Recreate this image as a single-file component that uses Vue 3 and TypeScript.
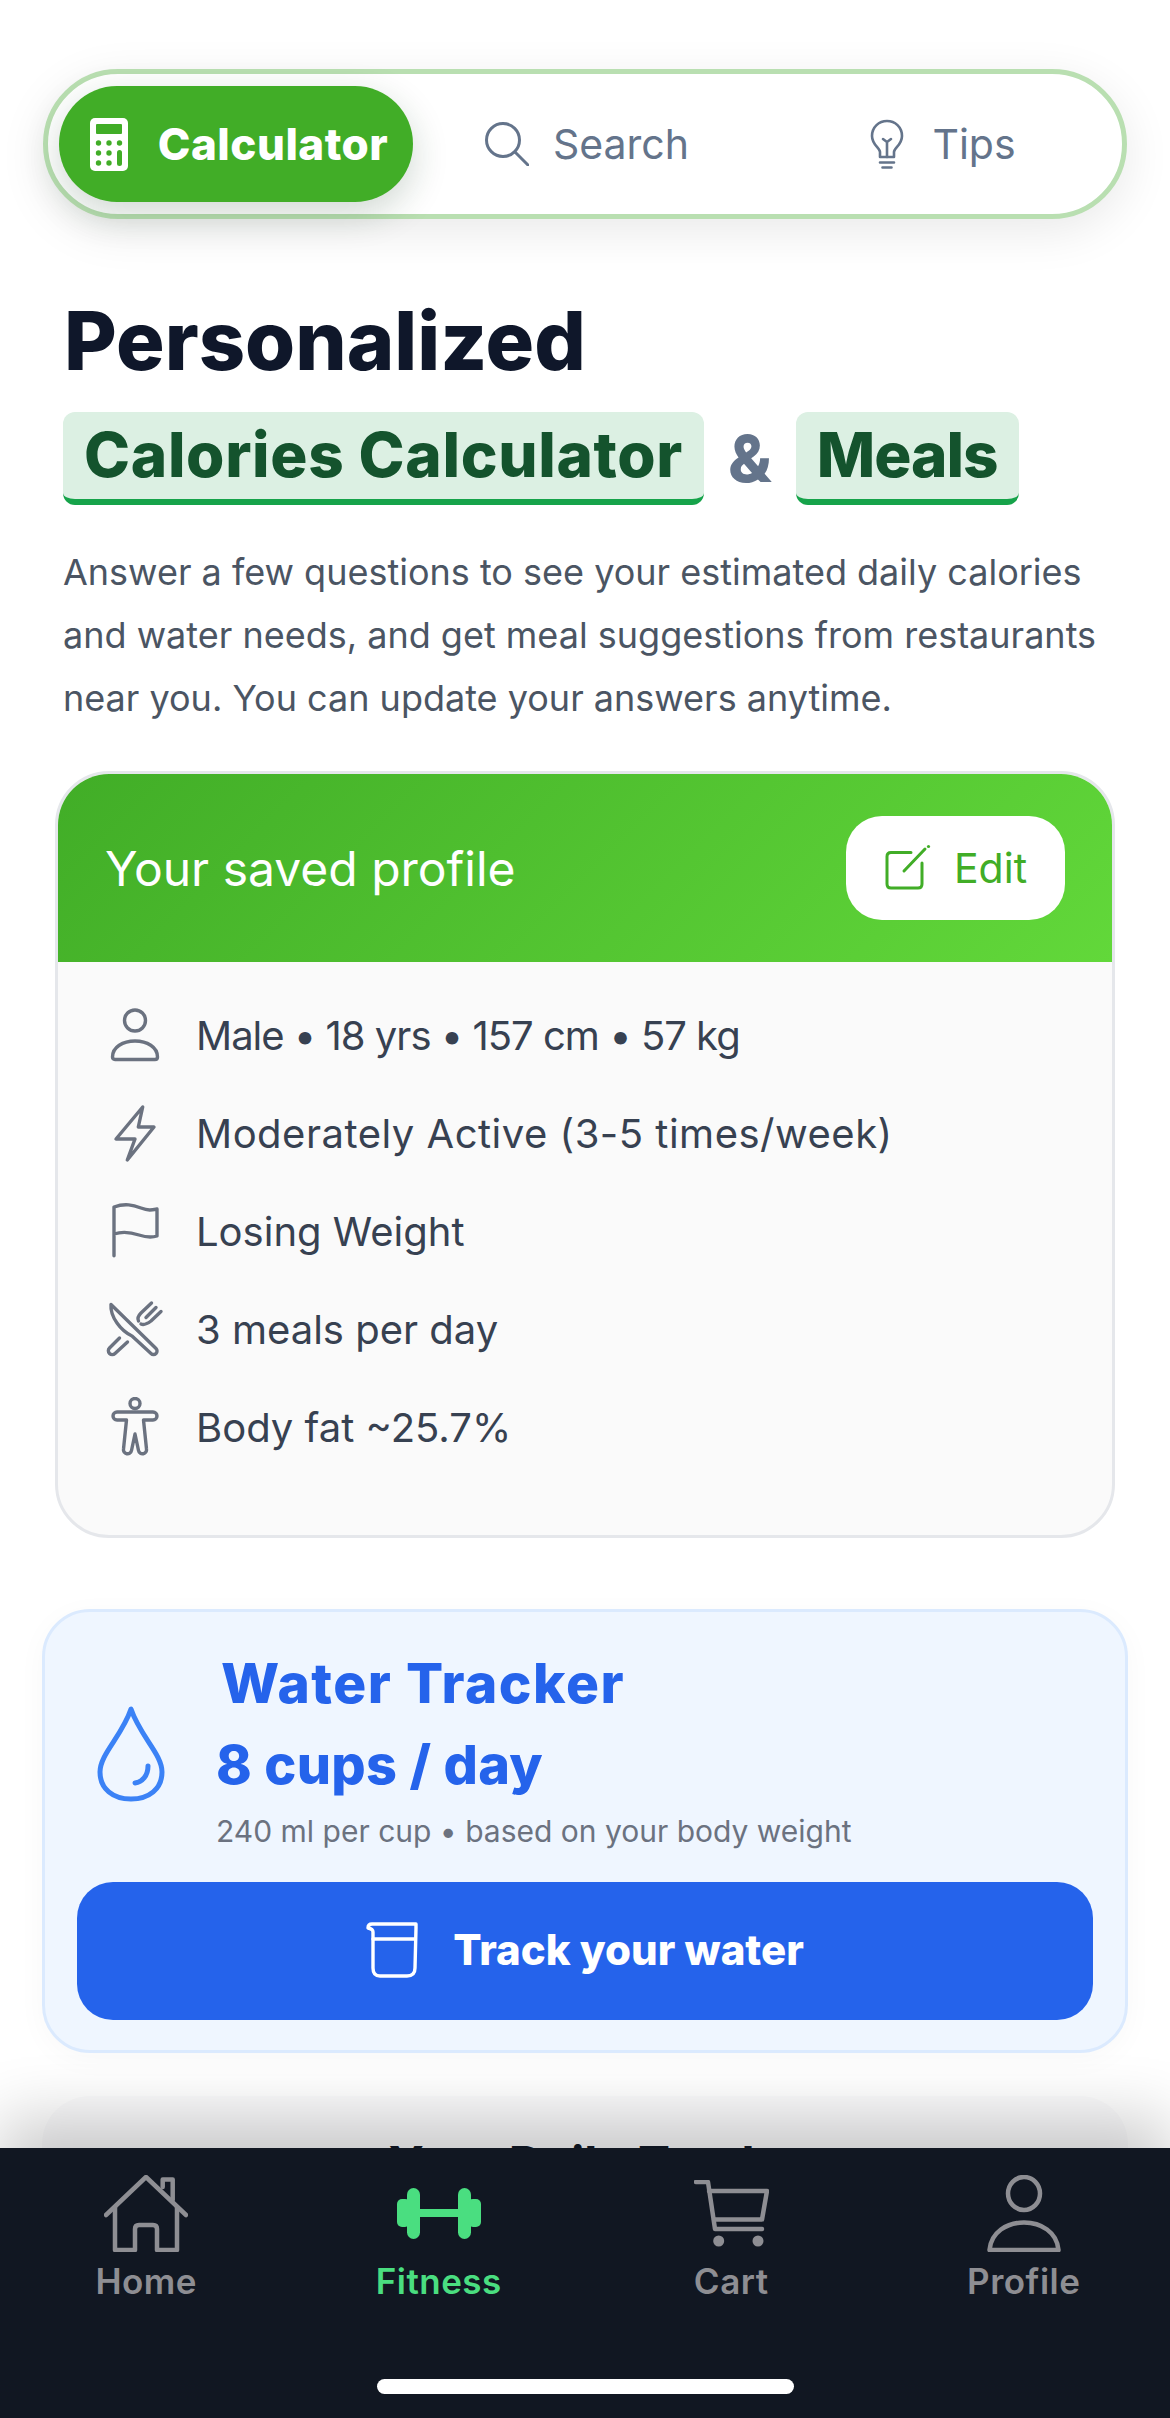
<template>
  <div class="screen">
    <main class="content">
      <nav class="seg">
        <div class="seg-tab active">
          <svg class="calc" viewBox="0 0 38 53">
            <rect width="38" height="53" rx="5" fill="#fff" />
            <rect x="6" y="6" width="26" height="10" rx="1" fill="#41ad27" />
            <circle v-for="d in calcDots" :key="d[0] + '-' + d[1]" :cx="d[0]" :cy="d[1]" r="2.7" fill="#41ad27" />
            <rect x="27" y="32" width="5" height="16" rx="2.5" fill="#41ad27" />
          </svg>
          <span>Calculator</span>
        </div>
        <div class="seg-tab search">
          <svg class="search-icon" viewBox="0 0 44 44" fill="none" stroke="#64748b" stroke-width="3" stroke-linecap="round">
            <circle cx="18" cy="18" r="16.5" />
            <path d="M30 30 L43 43" />
          </svg>
          <span>Search</span>
        </div>
        <div class="seg-tab tips">
          <svg class="bulb-icon" viewBox="0 0 34 50" fill="none" stroke="#64748b" stroke-width="2.6" stroke-linecap="round" stroke-linejoin="round">
            <path d="M10 38 V33 C10 29 2 26 2 17 C2 8 9 2 17 2 S32 8 32 17 C32 26 24 29 24 33 V38 Z" />
            <path d="M17 38 V23 M13 20 L17 23 L21 20 M10 43.5 H24 M12.5 48.5 H21.5" />
          </svg>
          <span>Tips</span>
        </div>
      </nav>

      <section class="intro">
        <h1>Personalized</h1>
        <div class="marks">
          <span class="mark">Calories Calculator</span>
          <span class="amp">&amp;</span>
          <span class="mark short">Meals</span>
        </div>
        <p>Answer a few questions to see your estimated daily calories and water needs, and get meal suggestions from restaurants near you. You can update your answers anytime.</p>
      </section>

      <section class="profile">
        <header class="profile-head">
          <span class="profile-title">Your saved profile</span>
          <button class="edit">
            <svg viewBox="0 0 50 50" fill="none" stroke="#41ad27" stroke-width="3" stroke-linecap="round">
              <path d="M27 9.5 H7 Q3 9.5 3 13.5 V41 Q3 45 7 45 H34 Q38 45 38 41 V20" />
              <path d="M20 28 L41 6" />
              <circle cx="44.5" cy="3.5" r="1.6" fill="#41ad27" stroke="none" />
            </svg>
            <span>Edit</span>
          </button>
        </header>
        <ul class="rows">
          <li class="tight">
            <svg viewBox="0 0 60 60">
              <circle cx="30" cy="15.5" r="10.5" />
              <path d="M7.5 52 C7.5 42 18 36 30 36 S52.5 42 52.5 52 Q52.5 54.5 50 54.5 H10 Q7.5 54.5 7.5 52 Z" />
            </svg>
            <span>Male • 18 yrs • 157 cm • 57 kg</span>
          </li>
          <li class="loose">
            <svg viewBox="0 0 60 60">
              <path d="M37.7 4 L11 36 H30 L22.3 57 L49 24 H33.3 Z" />
            </svg>
            <span>Moderately Active (3-5 times/week)</span>
          </li>
          <li>
            <svg viewBox="0 0 60 60">
              <path d="M9 54.7 V6 C20 2 28 4 36 7 S47 9 52 8 V35 C46 37 40 36 34 34 S18 30 9 33" />
            </svg>
            <span>Losing Weight</span>
          </li>
          <li>
            <svg viewBox="0 0 60 60">
              <path d="M6 5.5 L51 49.5 A3.5 3.5 0 0 1 46 54.5 L27 37 C16 32 5 18 6 5.5 Z" />
              <path d="M14.5 39 L4.5 49 A3.8 3.8 0 0 0 10 54.5 L22.5 43" />
              <path d="M46.5 4 L36 14 C33 17 32.5 20 33.5 22 M56 12.5 L46 22 C42 25 38 26 36 25 M51 8.5 L41 18.5" />
            </svg>
            <span>3 meals per day</span>
          </li>
          <li>
            <svg viewBox="0 0 60 60">
              <circle cx="30" cy="6.5" r="5" />
              <path d="M12 15 H48 A4 4 0 0 1 48 23 H38.5 L41.5 52 A4 4 0 0 1 33.5 53.5 L30 37 L26.5 53.5 A4 4 0 0 1 18.5 52 L21.5 23 H12 A4 4 0 0 1 12 15 Z" />
            </svg>
            <span>Body fat ~25.7%</span>
          </li>
        </ul>
      </section>

      <section class="water">
        <div class="water-top">
          <svg class="drop" viewBox="0 0 68 96" fill="none" stroke="#3b82f6" stroke-width="5" stroke-linecap="round" stroke-linejoin="round">
            <path d="M34 3 C25 30 3 48 3 66 C3 83 16 93 34 93 C52 93 65 83 65 66 C65 48 43 30 34 3 Z" />
            <path d="M51 60 C51 70 45 76 38 77" />
          </svg>
          <div class="water-text">
            <h2>Water Tracker</h2>
            <div class="cups">8 cups / day</div>
            <div class="cups-note">240 ml per cup • based on your body weight</div>
          </div>
        </div>
        <button class="track">
          <svg viewBox="0 0 52 56" fill="none" stroke="#fff" stroke-width="3.4" stroke-linecap="round" stroke-linejoin="round">
            <path d="M2 6 Q2 2 6 2 H50 V6 L49 46 Q49 54 41 54 H14 Q7 54 7 46 V10 Q7 7 2 6 Z" />
            <path d="M7 17 H49" />
          </svg>
          <span>Track your water</span>
        </button>
      </section>

      <section class="totals">
        <h2>Your Daily Totals</h2>
      </section>
    </main>

    <footer class="tabbar">
      <div class="tabs">
        <div v-for="tab in tabs" :key="tab.label" class="tab" :class="{ on: tab.on }">
          <div class="tab-icon">
            <svg v-if="tab.label === 'Home'" width="84" height="77" viewBox="0 0 84 77" fill="none" stroke="#8e8e93" stroke-width="4.5" stroke-linecap="round" stroke-linejoin="round">
              <path d="M2 40 L42 2 L82 40" />
              <path d="M11 32 V75 H31 V54 Q31 50 35 50 H49 Q53 50 53 54 V75 H73 V32" />
              <path d="M58.7 12 V4.5 H68.7 V25" />
            </svg>
            <svg v-else-if="tab.label === 'Fitness'" width="84" height="51" viewBox="0 0 84 51" fill="#4ade80">
              <rect x="0" y="11" width="13" height="28" rx="5" />
              <rect x="10" y="0" width="13" height="51" rx="6.5" />
              <rect x="20" y="21" width="44" height="8" />
              <rect x="61" y="0" width="13" height="51" rx="6.5" />
              <rect x="71" y="11" width="13" height="28" rx="5" />
            </svg>
            <svg v-else-if="tab.label === 'Cart'" width="75" height="67" viewBox="0 0 75 67" fill="none" stroke="#8e8e93" stroke-width="4.5" stroke-linecap="round" stroke-linejoin="round">
              <path d="M2 2 H14 L21 49 H68" />
              <path d="M15 11 H73 L68 39.5 H20" />
              <circle cx="24.7" cy="61" r="5.5" fill="#8e8e93" stroke="none" />
              <circle cx="64" cy="61" r="5.5" fill="#8e8e93" stroke="none" />
            </svg>
            <svg v-else width="74" height="77" viewBox="0 0 74 77" fill="none" stroke="#8e8e93" stroke-width="4.5" stroke-linejoin="round">
              <ellipse cx="37" cy="18.5" rx="16" ry="16.5" />
              <path d="M2.5 75 C4 57 20 47.5 37 47.5 S70 57 71.5 75 Z" />
            </svg>
          </div>
          <span class="tab-label">{{ tab.label }}</span>
        </div>
      </div>
      <div class="home-bar"></div>
    </footer>
  </div>
</template>

<script setup lang="ts">
type Tab = { label: string; on?: boolean };

const tabs: Tab[] = [
  { label: "Home" },
  { label: "Fitness", on: true },
  { label: "Cart" },
  { label: "Profile" },
];

const calcDots: [number, number][] = [
  [8.5, 25],
  [19, 25],
  [29.5, 25],
  [8.5, 35],
  [19, 35],
  [8.5, 45],
  [19, 45],
];
</script>

<style>
body {
  background: #fff;
}
</style>

<style scoped>
.screen {
  width: 1170px;
  height: 2418px;
  display: flex;
  flex-direction: column;
  overflow: hidden;
  background: #fff;
  font-family: Inter, "Liberation Sans", sans-serif;
}

.content {
  flex: 1;
  min-height: 0;
  overflow: hidden;
  padding-top: 69px;
}

.seg {
  margin: 0 43px;
  height: 150px;
  box-sizing: border-box;
  padding: 12px 11px;
  display: flex;
  border: 5px solid #b9dfb1;
  border-radius: 75px;
  background: #fff;
  box-shadow: 0 12px 48px rgba(0, 0, 0, 0.09);
}

.seg-tab {
  flex: 1;
  display: flex;
  align-items: center;
  justify-content: center;
  gap: 24px;
  font-size: 41px;
  color: #64748b;
}

.seg-tab.search {
  padding-left: 6px;
}

.seg-tab.tips {
  gap: 28px;
  padding-left: 20px;
}

.seg-tab.active {
  flex: none;
  box-sizing: border-box;
  width: 354px;
  padding-left: 6px;
  gap: 30px;
  border-radius: 60px;
  background: #41ad27;
  color: #fff;
  font-size: 44px;
  font-weight: 800;
  letter-spacing: 0.5px;
  box-shadow: 0 12px 36px rgba(20, 60, 30, 0.2);
}

.calc {
  width: 38px;
  height: 53px;
}

.search-icon {
  width: 44px;
  height: 44px;
}

.bulb-icon {
  width: 34px;
  height: 50px;
}

.intro {
  padding: 0 64px;
  margin-top: 72px;
}

h1 {
  margin: 0;
  font-size: 81px;
  line-height: 100px;
  font-weight: 800;
  color: #0f172a;
}

.marks {
  display: flex;
  align-items: center;
  margin: 21px 0 0 -1px;
}

.mark {
  padding: 0 21px 3px;
  height: 93px;
  box-sizing: border-box;
  display: flex;
  align-items: center;
  border-bottom: 6px solid #16a34a;
  border-radius: 12px;
  background: #dcf0e3;
  font-size: 62px;
  font-weight: 800;
  letter-spacing: 0.65px;
  color: #14532d;
}

.mark.short {
  letter-spacing: -1px;
}

.amp {
  margin: 0 24px;
  font-size: 64px;
  font-weight: 800;
  color: #64748b;
}

p {
  margin: 36px 0 0 -1px;
  font-size: 36px;
  line-height: 63px;
  color: #4b5563;
}

.profile {
  margin: 41px 55px 0;
  border: 3px solid #e5e7eb;
  border-radius: 54px;
  background: #fafafa;
  overflow: hidden;
  height: 767px;
  box-sizing: border-box;
}

.profile-head {
  height: 188px;
  padding: 0 47px;
  display: flex;
  align-items: center;
  justify-content: space-between;
  background: linear-gradient(135deg, #41ad27, #62d83a);
}

.profile-title {
  font-size: 48px;
  color: #fff;
}

.edit {
  width: 219px;
  height: 104px;
  display: flex;
  align-items: center;
  justify-content: center;
  gap: 20px;
  border: 0;
  border-radius: 36px;
  background: #fff;
  color: #41ad27;
  font-family: inherit;
  font-size: 41px;
}

.edit svg {
  width: 50px;
  height: 50px;
}

.rows {
  list-style: none;
  margin: 24px 0 0;
  padding: 0 0 0 47px;
}

.rows li {
  height: 98px;
  display: flex;
  align-items: center;
  gap: 31px;
  font-size: 40px;
  color: #374151;
}

.rows li.tight {
  letter-spacing: -1px;
}

.rows li.loose {
  letter-spacing: 0.5px;
}

.rows svg {
  width: 60px;
  height: 60px;
  fill: none;
  stroke: #6b7280;
  stroke-width: 3.4;
  stroke-linecap: round;
  stroke-linejoin: round;
}

.water {
  margin: 71px 42px 0;
  padding: 38px 32px 32px;
  height: 444px;
  box-sizing: border-box;
  border: 3px solid #dbeafe;
  border-radius: 48px;
  background: #eff6ff;
  box-shadow: 0 6px 30px rgba(0, 0, 0, 0.03);
}

.water-top {
  display: flex;
  align-items: center;
  gap: 51px;
  padding-left: 20px;
}

.drop {
  width: 68px;
  height: 96px;
  flex: none;
  margin-top: 5px;
}

h2 {
  margin: 0;
  font-size: 48px;
  font-weight: 700;
}

.water-text h2 {
  padding-left: 5px;
  font-size: 55px;
  font-weight: 800;
  letter-spacing: 1.5px;
  line-height: 66px;
  color: #2563eb;
}

.cups {
  margin-top: 16px;
  font-size: 54px;
  line-height: 66px;
  font-weight: 800;
  letter-spacing: 0.3px;
  color: #2563eb;
}

.cups-note {
  margin-top: 12px;
  font-size: 30px;
  line-height: 42px;
  color: #6b7280;
}

.track {
  width: 100%;
  height: 138px;
  margin-top: 30px;
  padding-bottom: 4px;
  display: flex;
  align-items: center;
  justify-content: center;
  gap: 35px;
  border: 0;
  border-radius: 36px;
  background: #2563eb;
  color: #fff;
  font-family: inherit;
  font-size: 42px;
  font-weight: 800;
}

.track svg {
  width: 52px;
  height: 56px;
}

.totals {
  margin: 43px 42px 0;
  height: 300px;
  padding-top: 38px;
  border-radius: 48px;
  background: #fbfbfc;
  text-align: center;
}

.totals h2 {
  color: #111827;
}

.tabbar {
  position: relative;
  flex: none;
  height: 270px;
  display: flex;
  flex-direction: column;
  background: #111722;
  box-shadow: 0 -30px 60px rgba(0, 0, 0, 0.2);
}

.tabs {
  display: grid;
  grid-template-columns: repeat(4, 1fr);
  padding-top: 27px;
}

.tab {
  display: flex;
  flex-direction: column;
  align-items: center;
  color: #8e8e93;
}

.tab.on {
  color: #4ade80;
}

.tab-icon {
  height: 77px;
  display: flex;
  align-items: center;
}

.tab-label {
  margin-top: 9px;
  font-size: 35px;
  letter-spacing: 0.5px;
  line-height: 40px;
  font-weight: 600;
}

.home-bar {
  width: 417px;
  height: 15px;
  margin: auto auto 24px;
  border-radius: 8px;
  background: #fff;
}
</style>
